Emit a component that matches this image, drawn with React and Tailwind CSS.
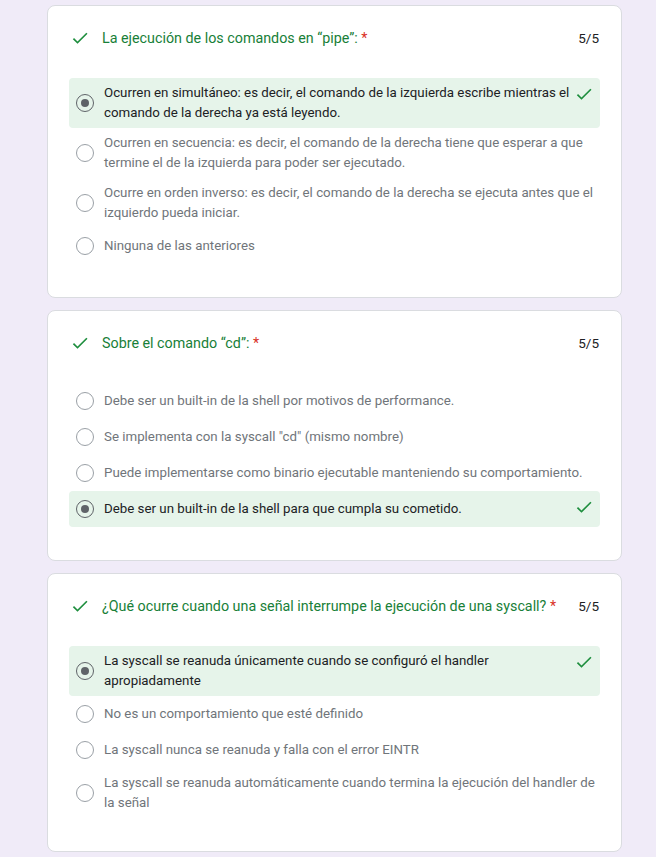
import React from "react";

const questions = [
  {
    title: "La ejecución de los comandos en “pipe”:",
    options: [
      "Ocurren en simultáneo: es decir, el comando de la izquierda escribe mientras el comando de la derecha ya está leyendo.",
      "Ocurren en secuencia: es decir, el comando de la derecha tiene que esperar a que termine el de la izquierda para poder ser ejecutado.",
      "Ocurre en orden inverso: es decir, el comando de la derecha se ejecuta antes que el izquierdo pueda iniciar.",
      "Ninguna de las anteriores",
    ],
    selected: 0,
  },
  {
    title: "Sobre el comando “cd”:",
    options: [
      "Debe ser un built-in de la shell por motivos de performance.",
      'Se implementa con la syscall "cd" (mismo nombre)',
      "Puede implementarse como binario ejecutable manteniendo su comportamiento.",
      "Debe ser un built-in de la shell para que cumpla su cometido.",
    ],
    selected: 3,
  },
  {
    title: "¿Qué ocurre cuando una señal interrumpe la ejecución de una syscall?",
    options: [
      "La syscall se reanuda únicamente cuando se configuró el handler apropiadamente",
      "No es un comportamiento que esté definido",
      "La syscall nunca se reanuda y falla con el error EINTR",
      "La syscall se reanuda automáticamente cuando termina la ejecución del handler de la señal",
    ],
    selected: 0,
  },
];

function Check({ className }) {
  return (
    <svg viewBox="0 0 24 24" className={className} fill="currentColor">
      <path d="M9 16.17L4.83 12l-1.42 1.41L9 19 21 7l-1.41-1.41z" />
    </svg>
  );
}

function Option({ text, selected }) {
  return (
    <div
      className={
        "flex items-center min-h-[36px] py-[5px] pl-[7px] rounded " +
        (selected ? "bg-[#e6f4ea] pr-[6px]" : "pr-[4px]")
      }
    >
      <div
        className={
          "w-[18px] h-[18px] shrink-0 rounded-full border-[1.5px] flex items-center justify-center " +
          (selected ? "border-[#5f6368]" : "border-[#9aa0a6]")
        }
      >
        {selected && <div className="w-[8px] h-[8px] rounded-full bg-[#5f6368]" />}
      </div>
      <p
        className={
          "flex-1 ml-[10px] text-[13.3px] leading-5 " +
          (selected ? "text-[#202124]" : "text-[#70757a]")
        }
      >
        {text}
      </p>
      {selected && (
        <Check className="w-5 h-5 shrink-0 self-start mt-[1px] text-[#1e8e3e]" />
      )}
    </div>
  );
}

function QuestionCard({ q }) {
  return (
    <div className="bg-white border border-[#dadce0] rounded-lg px-[21px] pt-5 pb-[33px]">
      <div className="flex items-center min-h-[24px] pl-[1px] pr-[1px]">
        <Check className="w-5 h-5 shrink-0 text-[#1e8e3e]" />
        <p className="flex-1 ml-3 text-[14.3px] leading-6 text-[#188038]">
          {q.title} <span className="text-[#d93025]">*</span>
        </p>
        <span className="ml-4 text-[13.5px] text-[#202124]">5/5</span>
      </div>
      <div className="mt-7 flex flex-col">
        {q.options.map((o, i) => (
          <Option key={i} text={o} selected={i === q.selected} />
        ))}
      </div>
    </div>
  );
}

export default function App() {
  return (
    <div
      className="min-h-screen bg-[#f0ebf8] pt-[5px] pb-6"
      style={{ fontFamily: "Roboto, 'Liberation Sans', sans-serif" }}
    >
      <div className="ml-[47px] w-[575px] flex flex-col gap-3">
        {questions.map((q, i) => (
          <QuestionCard key={i} q={q} />
        ))}
      </div>
    </div>
  );
}
